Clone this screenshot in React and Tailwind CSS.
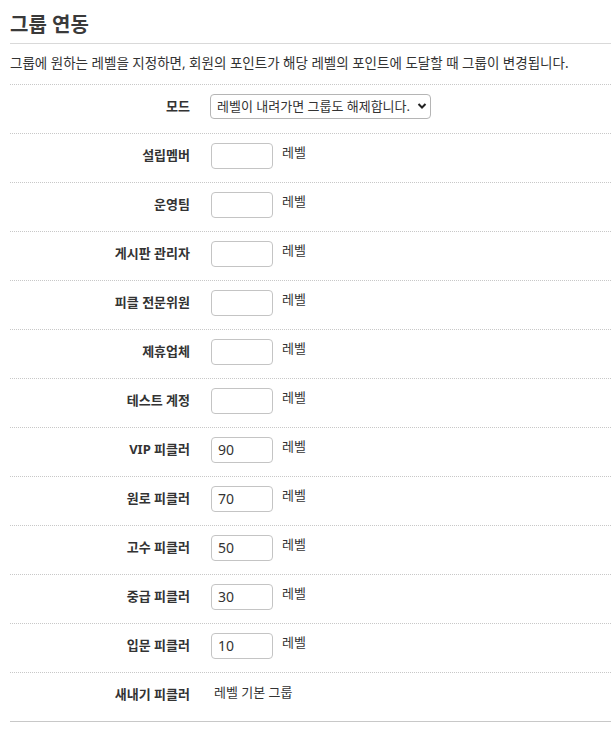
import React from "react";

const rows = [
  { label: "설립멤버", value: "" },
  { label: "운영팀", value: "" },
  { label: "게시판 관리자", value: "" },
  { label: "피클 전문위원", value: "" },
  { label: "제휴업체", value: "" },
  { label: "테스트 계정", value: "" },
  { label: "VIP 피클러", value: "90" },
  { label: "원로 피클러", value: "70" },
  { label: "고수 피클러", value: "50" },
  { label: "중급 피클러", value: "30" },
  { label: "입문 피클러", value: "10" },
];

const font = { fontFamily: '"Noto Sans", "Noto Sans CJK KR", sans-serif' };

export default function App() {
  return (
    <div className="bg-white text-[#333] pl-[10px]" style={font}>
      <h2 className="text-[20px] font-bold leading-[24px] pt-[13px] pb-[6px] border-b border-[#d9d9d9] text-[#3a3a3a]">
        그룹 연동
      </h2>
      <p className="text-[13.5px] leading-[20px] pt-[9px] pb-[11px] text-[#333]">
        그룹에 원하는 레벨을 지정하면, 회원의 포인트가 해당 레벨의 포인트에 도달할 때 그룹이 변경됩니다.
      </p>
      <div className="border-t border-dotted border-[#c8c8c8]">
        <div className="flex items-center h-[49px] pb-[5px] border-b border-dotted border-[#c8c8c8]">
          <div className="w-[180px] text-right text-[13px] font-bold">모드</div>
          <div className="ml-[20px] relative">
            <div className="w-[221px] h-[25px] border border-[#b5b5b5] rounded-[4px] flex items-center pl-[6px] text-[13px]">
              레벨이 내려가면 그룹도 해제합니다.
            </div>
            <svg className="absolute right-[4px] top-[8px]" width="10" height="8" viewBox="0 0 10 8">
              <path d="M1.5 2 L5 5.5 L8.5 2" fill="none" stroke="#222" strokeWidth="2" />
            </svg>
          </div>
        </div>
        {rows.map((r) => (
          <div
            key={r.label}
            className="flex items-center h-[49px] pb-[5px] border-b border-dotted border-[#c8c8c8]"
          >
            <div className="w-[180px] text-right text-[13px] font-bold">{r.label}</div>
            <div className="ml-[21px] w-[62px] h-[26px] border border-[#c4c4c4] rounded-[4px] flex items-center pl-[6px] text-[14px] text-[#333]">
              {r.value}
            </div>
            <span className="ml-[9px] text-[13px] -mt-[5px]">레벨</span>
          </div>
        ))}
        <div className="flex items-center h-[49px] pb-[5px] border-b border-[#c8c8c8]">
          <div className="w-[180px] text-right text-[13px] font-bold">새내기 피클러</div>
          <div className="ml-[24px] text-[13px] -mt-[3px]">레벨 기본 그룹</div>
        </div>
      </div>
    </div>
  );
}
